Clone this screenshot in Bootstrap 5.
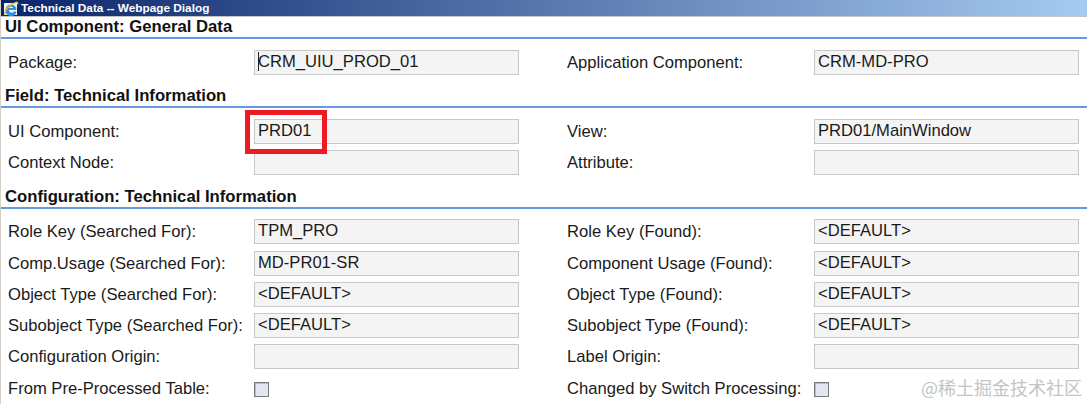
<!DOCTYPE html>
<html lang="en"><head><meta charset="utf-8"><title>Technical Data</title>
<link href="https://cdn.jsdelivr.net/npm/bootstrap@5.3.0/dist/css/bootstrap.min.css" rel="stylesheet">
<style>
html,body{height:404px;overflow:hidden;background:#fff}
body{font-family:"Liberation Sans",Arial,sans-serif;color:#1a1a1a;font-size:16.6px;line-height:17px;position:relative;border-left:1px solid #d4d0c8}
.ttl{height:17px;border-bottom:1px solid #c4c4c4;margin-left:-1px;background:linear-gradient(90deg,#0a246a,#a6caf0);color:#fff;font:bold 11.8px/15px "Liberation Sans",Arial,sans-serif;gap:2px;padding-left:3px}
.ttl svg{width:16px;height:15px;flex:none}
.sect{font-weight:700;font-size:16.7px;color:#111;padding-left:4px;height:21px;line-height:18px;border-bottom:2px solid #6699e0}
.s1{margin-top:1px}
.frow{display:grid;grid-template-columns:253px 265px 48px 247px 265px;height:31px;align-items:center}
.frow label{padding-left:7px;margin:0;white-space:nowrap}
.fld{height:25px;border:1px solid #c8c8c8;background:#f4f4f4;padding:0 3px;line-height:21px;white-space:nowrap}
.cbx{width:15px;height:15px;border:1px solid #7a7a7a;background:#e4e6f2;box-shadow:inset 1px 1px 0 #bbb;display:block;margin-top:2px}
.caret-i{border-left:1px solid #222;display:inline-block;height:19px;width:0;vertical-align:-4px;margin-right:-1px}
.hl{position:absolute;left:244px;top:110px;width:82px;height:44px;border:5px solid #ed1c24}
.wm{position:absolute;right:5px;top:377px;font:18px/20px "Noto Sans CJK SC",sans-serif;color:#c4c4c4;white-space:nowrap}
.p1{margin-top:8px}.s2{margin-top:9px}.p2{margin-top:8px}.s3{margin-top:10px}.p3{margin-top:7px}
.gap1{margin-bottom:1px}
</style></head><body>
<div class="ttl d-flex align-items-center">
<svg viewBox="0 0 16 15"><rect x="1" y="2" width="13" height="12" fill="#eef3fa"/><path d="M2.500 9a5.500 5.500 0 1 1 11 0H6a2.600 2.600 0 0 0 4.800 1.500h2.600A5.500 5.500 0 0 1 2.500 9zM6 7h4.200a2.200 2.200 0 0 0-4.200 0z" fill="#2f8fe0" fill-rule="evenodd"/><path d="M1.500 13.500C2 8 7 3 13 1.300c1.500-.4 2 .5 1.500 2" fill="none" stroke="#f2b705" stroke-width="1.400"/></svg>
<span>Technical Data -- Webpage Dialog</span></div>
<div class="sect s1">UI Component: General Data</div>
<div class="p1">
<div class="frow"><label>Package:</label><div class="fld"><span class="caret-i"></span>CRM_UIU_PROD_01</div><span></span><label class="ps-0">Application Component:</label><div class="fld">CRM-MD-PRO</div></div>
</div>
<div class="sect s2">Field: Technical Information</div>
<div class="p2">
<div class="frow"><label>UI Component:</label><div class="fld">PRD01</div><span></span><label class="ps-0">View:</label><div class="fld">PRD01/MainWindow</div></div>
<div class="frow"><label>Context Node:</label><div class="fld"></div><span></span><label class="ps-0">Attribute:</label><div class="fld"></div></div>
</div>
<div class="sect s3">Configuration: Technical Information</div>
<div class="p3">
<div class="frow gap1"><label>Role Key (Searched For):</label><div class="fld">TPM_PRO</div><span></span><label class="ps-0">Role Key (Found):</label><div class="fld">&lt;DEFAULT&gt;</div></div>
<div class="frow"><label>Comp.Usage (Searched For):</label><div class="fld">MD-PR01-SR</div><span></span><label class="ps-0">Component Usage (Found):</label><div class="fld">&lt;DEFAULT&gt;</div></div>
<div class="frow"><label>Object Type (Searched For):</label><div class="fld">&lt;DEFAULT&gt;</div><span></span><label class="ps-0">Object Type (Found):</label><div class="fld">&lt;DEFAULT&gt;</div></div>
<div class="frow"><label>Subobject Type (Searched For):</label><div class="fld">&lt;DEFAULT&gt;</div><span></span><label class="ps-0">Subobject Type (Found):</label><div class="fld">&lt;DEFAULT&gt;</div></div>
<div class="frow gap1"><label>Configuration Origin:</label><div class="fld"></div><span></span><label class="ps-0">Label Origin:</label><div class="fld"></div></div>
<div class="frow"><label>From Pre-Processed Table:</label><div><span class="cbx"></span></div><span></span><label class="ps-0">Changed by Switch Processing:</label><div><span class="cbx"></span></div></div>
</div>
<div class="hl"></div>
<div class="wm">@稀土掘金技术社区</div>
</body></html>
